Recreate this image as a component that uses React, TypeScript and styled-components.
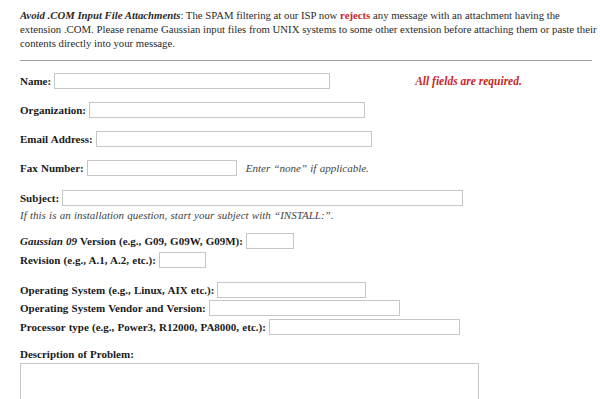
import React from "react";
import styled, { createGlobalStyle } from "styled-components";

const Global = createGlobalStyle`
  html, body { margin: 0; padding: 0; background: #ffffff; }
  body {
    font-family: "Liberation Serif", "Times New Roman", serif;
    font-size: 11px;
    word-spacing: 0.5px;
    color: #222222;
  }
`;

const Page = styled.div`
  padding: 8px 8px 0 20px;
  width: 572px;
`;

const Intro = styled.p`
  margin: 0 -8px 0 0;
  font-size: 10.75px;
  line-height: 14px;
  word-spacing: 0;
  color: #2a2a2a;
`;

const Warn = styled.b`
  color: #cc1f1f;
`;

const Rule = styled.hr`
  border: 0;
  border-top: 1px solid #a0a0a0;
  margin: 10px 0 0;
  height: 0;
`;

const Row = styled.div<{ $gap: number }>`
  display: flex;
  align-items: center;
  height: 16px;
  margin-top: ${(p) => p.$gap}px;
  white-space: nowrap;
`;

const Label = styled.label`
  font-weight: bold;
  color: #1a1a1a;
`;

const Field = styled.input<{ $w: number }>`
  box-sizing: border-box;
  width: ${(p) => p.$w}px;
  height: 16px;
  margin: 0 0 0 3px;
  padding: 0 2px;
  border: 1px solid #c6c6c6;
  background: #ffffff;
  font: inherit;
`;

const Required = styled.span`
  margin-left: 85px;
  color: #cc1f1f;
  font-weight: bold;
  font-style: italic;
  font-size: 11.5px;
  word-spacing: 0;
`;

const Note = styled.span`
  margin-left: 9px;
  font-style: italic;
  color: #444444;
`;

const Hint = styled.div`
  margin-top: 2px;
  font-style: italic;
  color: #444444;
  line-height: 14px;
`;

const Heading = styled.div<{ $gap: number }>`
  font-weight: bold;
  color: #1a1a1a;
  line-height: 14px;
  margin-top: ${(p) => p.$gap}px;
`;

const Area = styled.textarea`
  display: block;
  box-sizing: border-box;
  width: 459px;
  height: 90px;
  margin-top: 2px;
  border: 1px solid #c6c6c6;
  resize: none;
  font: inherit;
`;

export default function App() {
  return (
    <>
      <Global />
      <Page>
        <Intro>
          <b>
            <i>Avoid .COM Input File Attachments</i>
          </b>
          : The SPAM filtering at our ISP now <Warn>rejects</Warn> any message
          with an attachment having the extension .COM. Please rename Gaussian
          input files from UNIX systems to some other extension before attaching
          them or paste their contents directly into your message.
        </Intro>
        <Rule />

        <Row $gap={12}>
          <Label>Name:</Label>
          <Field $w={276} />
          <Required>All fields are required.</Required>
        </Row>
        <Row $gap={13}>
          <Label>Organization:</Label>
          <Field $w={276} />
        </Row>
        <Row $gap={13}>
          <Label>Email Address:</Label>
          <Field $w={276} />
        </Row>
        <Row $gap={13}>
          <Label>Fax Number:</Label>
          <Field $w={150} />
          <Note>Enter “none” if applicable.</Note>
        </Row>
        <Row $gap={14}>
          <Label>Subject:</Label>
          <Field $w={401} />
        </Row>
        <Hint>
          If this is an installation question, start your subject with
          “INSTALL:”.
        </Hint>

        <Row $gap={11}>
          <Label>
            <i>Gaussian 09</i> Version (e.g., G09, G09W, G09M):
          </Label>
          <Field $w={48} />
        </Row>
        <Row $gap={3}>
          <Label>Revision (e.g., A.1, A.2, etc.):</Label>
          <Field $w={47} />
        </Row>

        <Row $gap={14}>
          <Label>Operating System (e.g., Linux, AIX etc.):</Label>
          <Field $w={149} />
        </Row>
        <Row $gap={2}>
          <Label>Operating System Vendor and Version:</Label>
          <Field $w={191} />
        </Row>
        <Row $gap={3}>
          <Label>Processor type (e.g., Power3, R12000, PA8000, etc.):</Label>
          <Field $w={191} />
        </Row>

        <Heading $gap={12}>Description of Problem:</Heading>
        <Area />
      </Page>
    </>
  );
}
